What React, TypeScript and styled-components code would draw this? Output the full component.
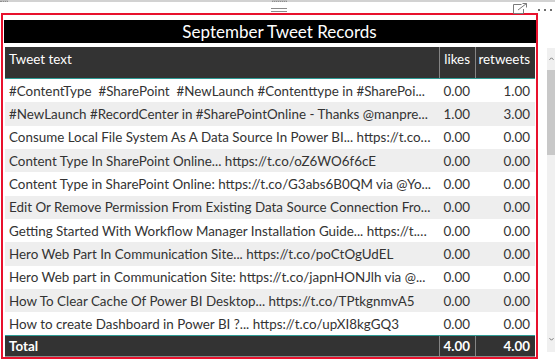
import React from "react";
import styled, { createGlobalStyle } from "styled-components";

const Global = createGlobalStyle`
  html, body { margin: 0; padding: 0; background: #ffffff; }
  body { font-family: "Segoe UI", Lato, "Open Sans", sans-serif; }
`;

const Page = styled.div`
  width: 555px;
  height: 361px;
  overflow: hidden;
  background: #ffffff;
  display: flex;
  flex-direction: column;
`;

const Chrome = styled.div`
  position: relative;
  height: 11px;
  border-top: 2px solid #d2d2d2;
  display: flex;
  align-items: flex-start;
`;

const Grip = styled.div<{ $left: number; $width: number }>`
  position: absolute;
  top: -2px;
  left: ${(p) => p.$left}px;
  width: ${(p) => p.$width}px;
  height: 2px;
  background: #bdbdbd;
  border-bottom: 1px dotted #8f8f8f;
  box-sizing: border-box;
`;

const Hamburger = styled.div`
  margin-left: 271px;
  margin-top: 6px;
  width: 16px;
  height: 2px;
  border-top: 1px solid #8a8a8a;
  border-bottom: 1px solid #8a8a8a;
`;

const Spacer = styled.div`
  flex: 1;
`;

const FocusIcon = styled.svg`
  margin-top: 1px;
  width: 15px;
  height: 11px;
  display: block;
`;

const Dots = styled.div`
  margin-left: 10px;
  margin-right: 3px;
  margin-top: 7px;
  display: flex;
  gap: 4px;
`;

const Dot = styled.span`
  width: 2px;
  height: 2px;
  background: #6f6f6f;
  display: block;
`;

const Main = styled.div`
  display: flex;
  align-items: flex-start;
`;

const Frame = styled.div`
  margin-left: 1px;
  width: 537px;
  height: 346px;
  box-sizing: border-box;
  border: 2px solid #e8112d;
  padding: 5px 0 0 0;
  display: flex;
  flex-direction: column;
`;

const Title = styled.div`
  margin-left: 1px;
  width: 532px;
  height: 23px;
  box-sizing: border-box;
  padding-left: 19px;
  background: #000000;
  color: #ffffff;
  font-size: 17px;
  line-height: 23px;
  text-align: center;
  white-space: nowrap;
`;

const Table = styled.div`
  margin-top: 4px;
  margin-left: 2px;
  width: 530px;
  display: flex;
  flex-direction: column;
  font-size: 13.4px;
`;

const GridRow = styled.div`
  display: grid;
  grid-template-columns: 434px 36px 60px;
`;

const HeaderRow = styled(GridRow)`
  height: 31px;
  background: #333333;
  color: #ffffff;
  border-bottom: 1px solid #2f9c95;
  align-items: start;
`;

const Body = styled.div`
  height: 256px;
  overflow: hidden;
`;

const DataRow = styled(GridRow)<{ $alt: boolean }>`
  height: 23.333px;
  align-items: center;
  background: ${(p) => (p.$alt ? "#eeeeee" : "#ffffff")};
  color: #333333;
`;

const TotalRow = styled(GridRow)`
  height: 20px;
  background: #333333;
  color: #ffffff;
  font-weight: 700;
  border-top: 1px solid #2f9c95;
  border-bottom: 1px solid #8c8c8c;
  align-items: center;
`;

const Cell = styled.div<{ $num?: boolean; $divider?: boolean; $top?: boolean }>`
  box-sizing: border-box;
  height: ${(p) => (p.$top ? "100%" : "auto")};
  padding: ${(p) => (p.$top ? "3px" : "0")} ${(p) => (p.$num ? "5px" : "8px")} 0
    ${(p) => (p.$num ? "0" : "4px")};
  text-align: ${(p) => (p.$num ? "right" : "left")};
  border-left: ${(p) => (p.$divider ? "1px solid #858585" : "none")};
  line-height: 18px;
  white-space: pre;
  overflow: hidden;
  text-overflow: ellipsis;
`;

const TotalCell = styled(Cell)`
  height: 100%;
  display: flex;
  align-items: center;
  justify-content: ${(p) => (p.$num ? "flex-end" : "flex-start")};
`;

const Scrollbar = styled.div`
  margin-left: 9px;
  margin-top: 35px;
  width: 8px;
  height: 304px;
  background: #f0f0f0;
  display: flex;
  flex-direction: column;
`;

const ArrowBox = styled.div<{ $pad: number }>`
  height: 22px;
  box-sizing: border-box;
  padding: ${(p) => p.$pad}px 0 0 2px;
`;

const Chevron = styled.svg`
  display: block;
  width: 5px;
  height: 3px;
`;

const Thumb = styled.div`
  height: 85px;
  background: #c8c8c8;
`;

const Track = styled.div`
  flex: 1;
`;

type Rec = { text: string; likes: string; retweets: string };

const rows: Rec[] = [
  { text: "#ContentType  #SharePoint  #NewLaunch #Contenttype in #SharePoi...", likes: "0.00", retweets: "1.00" },
  { text: "#NewLaunch #RecordCenter in #SharePointOnline - Thanks @manpre...", likes: "1.00", retweets: "3.00" },
  { text: "Consume Local File System As A Data Source In Power BI... https://t.co/...", likes: "0.00", retweets: "0.00" },
  { text: "Content Type In SharePoint Online... https://t.co/oZ6WO6f6cE", likes: "0.00", retweets: "0.00" },
  { text: "Content Type in SharePoint Online: https://t.co/G3abs6B0QM via @Yo...", likes: "0.00", retweets: "0.00" },
  { text: "Edit Or Remove Permission From Existing Data Source Connection Fro...", likes: "0.00", retweets: "0.00" },
  { text: "Getting Started With Workflow Manager Installation Guide... https://t.c...", likes: "0.00", retweets: "0.00" },
  { text: "Hero Web Part In Communication Site... https://t.co/poCtOgUdEL", likes: "0.00", retweets: "0.00" },
  { text: "Hero Web part in Communication Site: https://t.co/japnHONJlh via @...", likes: "0.00", retweets: "0.00" },
  { text: "How To Clear Cache Of Power BI Desktop... https://t.co/TPtkgnmvA5", likes: "0.00", retweets: "0.00" },
  { text: "How to create Dashboard in Power BI ?... https://t.co/upXI8kgGQ3", likes: "0.00", retweets: "0.00" },
];

export default function App() {
  return (
    <>
      <Global />
      <Page>
        <Chrome>
          <Grip $left={0} $width={8} />
          <Grip $left={272} $width={15} />
          <Hamburger />
          <Spacer />
          <FocusIcon viewBox="0 0 15 11" fill="none" stroke="#7a7a7a" strokeWidth="1">
            <path d="M8.5 1.5 H0.5 V10.5 H10.5 V6" />
            <path d="M5 7 L13.5 0.5" />
            <path d="M9.5 0.5 H13.5 V4.5" />
          </FocusIcon>
          <Dots>
            <Dot />
            <Dot />
            <Dot />
          </Dots>
        </Chrome>
        <Main>
          <Frame>
            <Title>September Tweet Records</Title>
            <Table>
              <HeaderRow>
                <Cell $top>Tweet text</Cell>
                <Cell $top $num $divider>likes</Cell>
                <Cell $top $num $divider>retweets</Cell>
              </HeaderRow>
              <Body>
                {rows.map((r, i) => (
                  <DataRow key={i} $alt={i % 2 === 1}>
                    <Cell>{r.text}</Cell>
                    <Cell $num>{r.likes}</Cell>
                    <Cell $num>{r.retweets}</Cell>
                  </DataRow>
                ))}
              </Body>
              <TotalRow>
                <TotalCell>Total</TotalCell>
                <TotalCell $num $divider>4.00</TotalCell>
                <TotalCell $num $divider>4.00</TotalCell>
              </TotalRow>
            </Table>
          </Frame>
          <Scrollbar>
            <ArrowBox $pad={9}>
              <Chevron viewBox="0 0 5 3" fill="none" stroke="#777777" strokeWidth="1">
                <polyline points="0.5,2.8 2.5,0.8 4.5,2.8" />
              </Chevron>
            </ArrowBox>
            <Thumb />
            <Track />
            <ArrowBox $pad={8}>
              <Chevron viewBox="0 0 5 3" fill="none" stroke="#777777" strokeWidth="1">
                <polyline points="0.5,0.2 2.5,2.2 4.5,0.2" />
              </Chevron>
            </ArrowBox>
          </Scrollbar>
        </Main>
      </Page>
    </>
  );
}
